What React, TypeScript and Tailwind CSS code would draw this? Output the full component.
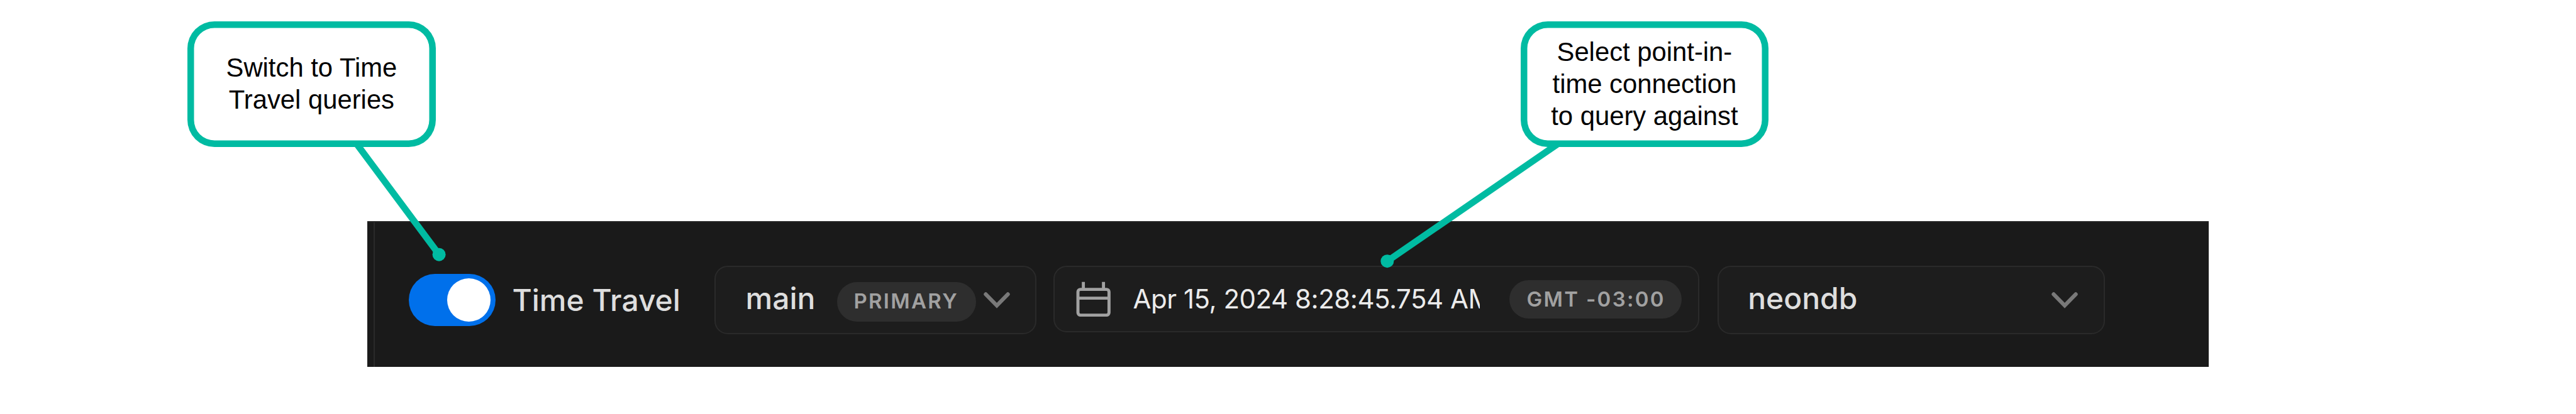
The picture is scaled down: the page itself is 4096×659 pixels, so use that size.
import type { ReactNode } from "react";

function Chevron() {
  return (
    <svg className="h-[26px] w-[42px] shrink-0" viewBox="0 0 42 26" fill="none">
      <path d="M3.4 3.4 21 21.4 38.6 3.4" stroke="#797979" strokeWidth="6.2" strokeLinecap="round" />
    </svg>
  );
}

function CalendarIcon() {
  return (
    <svg className="h-[56px] w-[56px] shrink-0" viewBox="0 0 56 56" fill="none" stroke="#a1a1a1" strokeWidth="4.9">
      <rect x="3" y="12.6" width="49.4" height="41" rx="4" />
      <path d="M3 26.6H52.4M11.6 0.8V12.6M43.6 0.8V12.6" />
    </svg>
  );
}

function Field({ className, children }: { className: string; children: ReactNode }) {
  return (
    <div className={`flex shrink-0 items-center rounded-[21px] border-2 border-[#2a2a2a] bg-[#1d1d1d] ${className}`}>
      {children}
    </div>
  );
}

function Badge({ className, children }: { className: string; children: ReactNode }) {
  return (
    <div
      className={`flex shrink-0 items-center rounded-full bg-[#2e2e2e] text-[33px] font-semibold tracking-[2.3px] whitespace-nowrap text-[#a1a1a1] ${className}`}
    >
      {children}
    </div>
  );
}

function Callout({ className, lines }: { className: string; lines: string[] }) {
  return (
    <div
      className={`absolute top-[34px] flex h-[200.4px] w-[394.8px] flex-col items-center justify-center rounded-[43px] bg-white font-['Liberation_Sans',Arial,sans-serif] text-[41.8px] leading-[50.7px] whitespace-nowrap text-black shadow-[inset_0_0_0_10.5px_#00bba2] ${className}`}
    >
      {lines.map((line) => (
        <span key={line}>{line}</span>
      ))}
    </div>
  );
}

export default function App() {
  return (
    <div className="relative h-[659px] w-[4096px] overflow-hidden bg-white pt-[352px] pl-[584px] font-[Inter,sans-serif]">
      <div className="flex h-[232px] w-[2928px] border-t-2 border-[#242424] bg-[#1a1a1a] pl-[9.5px]">
        <div className="flex flex-1 items-start border-l-2 border-[#2a2a2a] pt-[68.7px] pl-[54.6px]">
          <div className="mt-[13px] flex h-[83.7px] w-[137.5px] shrink-0 items-center justify-end rounded-full bg-[#0070eb] pr-[7.6px]">
            <div className="size-[68.8px] rounded-full bg-white" />
          </div>
          <span className="mt-[25px] ml-[26.8px] w-[321.2px] shrink-0 text-[48px] leading-[60px] font-medium whitespace-nowrap text-[#dedede]">
            Time Travel
          </span>

          <Field className="h-[109.6px] w-[512.8px] pl-[48px]">
            <span className="w-[145.8px] shrink-0 pb-[5px] text-[48px] leading-[60px] font-medium text-[#dedede]">main</span>
            <Badge className="mt-[5.4px] h-[62.8px] w-[220.5px] pl-[26px]">PRIMARY</Badge>
            <div className="mt-[1.5px] ml-[12.1px] flex">
              <Chevron />
            </div>
          </Field>

          <Field className="ml-[27px] h-[106.3px] w-[1026.7px] pl-[33.8px]">
            <CalendarIcon />
            <span className="ml-[34.4px] w-[551px] shrink-0 overflow-hidden text-[42px] leading-[60px] tracking-[-0.48px] whitespace-nowrap text-[#ececec]">
              Apr 15, 2024 8:28:45.754 AM
            </span>
            <Badge className="mt-[2px] ml-[47.3px] h-[61px] w-[273.7px] pl-[27.6px]">GMT -03:00</Badge>
          </Field>

          <Field className="ml-[28.9px] h-[109.6px] w-[615.7px] justify-between pr-[41.1px] pl-[46.2px]">
            <span className="pb-[5px] text-[48px] leading-[60px] font-medium text-[#dedede]">neondb</span>
            <div className="mt-[1.5px] flex">
              <Chevron />
            </div>
          </Field>
        </div>
      </div>

      <svg className="absolute inset-0 h-[659px] w-[4096px]" viewBox="0 0 4096 659" stroke="#00bba2" strokeWidth="10.5">
        <path d="M563 223.5 698.1 405.2M2486.4 222.6 2205.8 415.7" />
        <circle cx="698.1" cy="405.2" r="10.5" fill="#00bba2" stroke="none" />
        <circle cx="2205.8" cy="415.7" r="10.5" fill="#00bba2" stroke="none" />
      </svg>
      <Callout className="left-[298px]" lines={["Switch to Time", "Travel queries"]} />
      <Callout className="left-[2417.5px]" lines={["Select point-in-", "time connection", "to query against"]} />
    </div>
  );
}
